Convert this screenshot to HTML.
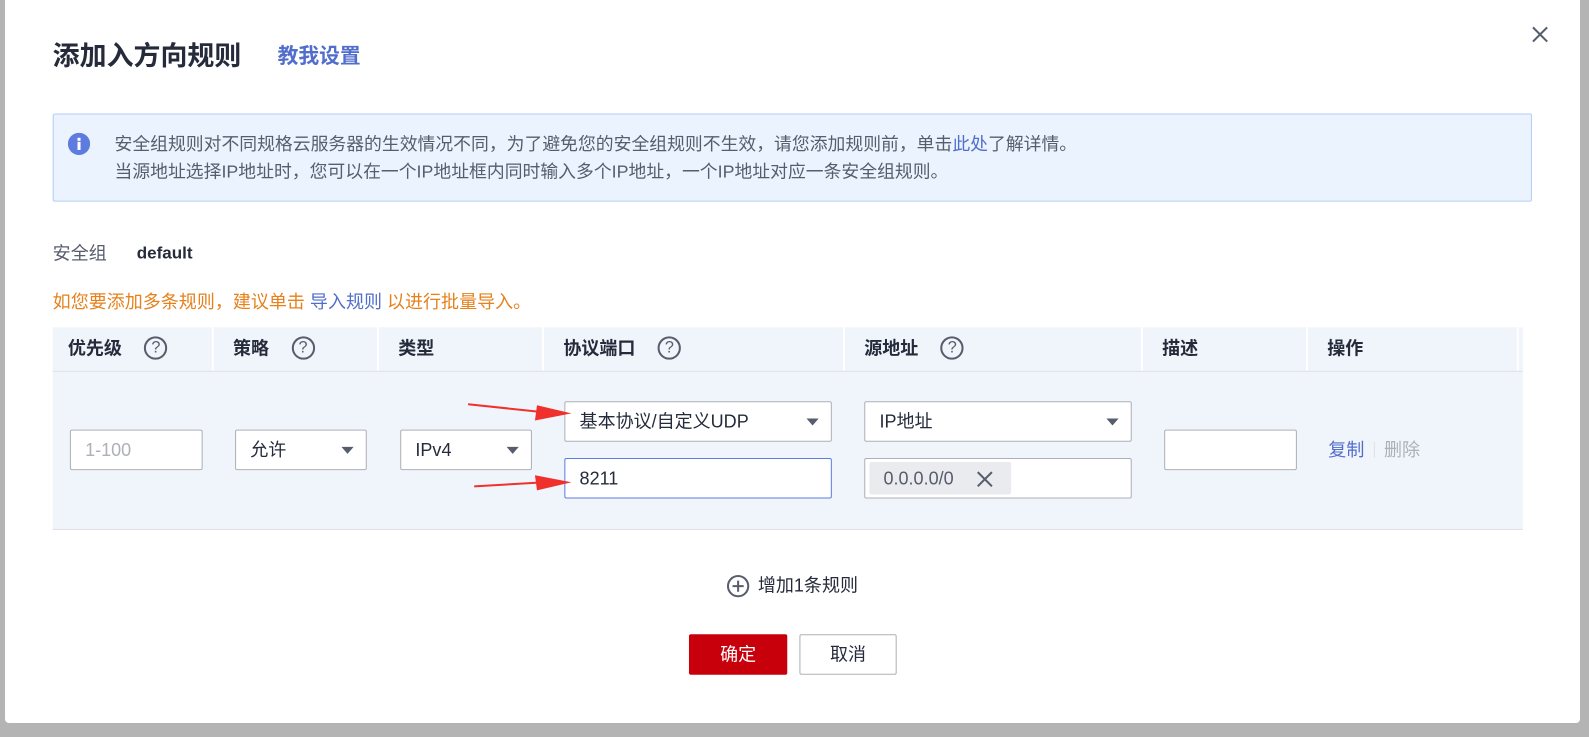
<!DOCTYPE html>
<html><head><meta charset="utf-8"><style>
*{box-sizing:border-box;margin:0;padding:0}
body{width:1589px;height:727px;background:#b4b4b4;position:relative;overflow:hidden;font-family:"Liberation Sans","Noto Sans CJK SC",sans-serif;color:#252b3a;font-size:17.8px}
.modal{position:absolute;left:5px;top:0;width:1575px;height:723px;background:#fff;border-radius:0 0 4px 4px}
.w{position:absolute;left:0;top:0;width:1589px;height:727px;transform:scale(1.0132);transform-origin:0 0}
.a{position:absolute}
.th{position:absolute;top:323px;height:43px;background:#f0f4fb;font-weight:bold;font-size:17.8px;line-height:43px;padding-left:19px;color:#252b3a;white-space:nowrap}
.q{display:inline-block;width:23px;height:23px;border:2px solid #575d6c;border-radius:50%;text-align:center;line-height:19px;font-size:16px;font-weight:normal;color:#575d6c;vertical-align:middle;margin-left:22px;margin-top:-3px}
.in{position:absolute;height:40px;background:#fff;border:1px solid #adb0b8;border-radius:2px;font-size:17.8px;line-height:38px;padding-left:14px;color:#252b3a;white-space:nowrap}
.tri{position:absolute;right:12px;top:16px;width:0;height:0;border-left:6px solid transparent;border-right:6px solid transparent;border-top:7px solid #575d6c}
</style></head><body>
<div class="modal"></div>
<div class="w">
<div class="a" style="left:52px;top:38px;font-size:26.6px;font-weight:bold;line-height:34px">添加入方向规则</div>
<div class="a" style="left:274px;top:43px;font-size:20.5px;font-weight:bold;color:#526ecc;line-height:26px">教我设置</div>
<svg class="a" style="left:1511px;top:25px" width="18" height="18"><path d="M2 2L16 16M16 2L2 16" stroke="#575d6c" stroke-width="2"/></svg>
<div class="a" style="left:52px;top:112px;width:1460px;height:87px;background:#ebf4fe;border:1px solid #b4cdf7;border-radius:2px"></div>
<svg class="a" style="left:67px;top:131px" width="22" height="22"><circle cx="11" cy="11" r="11" fill="#5e7ce0"/><rect x="9.5" y="9" width="3" height="8" fill="#fff"/><rect x="9.5" y="5" width="3" height="3" fill="#fff"/></svg>
<div class="a" style="left:113px;top:129px;font-size:17.6px;line-height:27px;color:#575d6c;white-space:nowrap">安全组规则对不同规格云服务器的生效情况不同，为了避免您的安全组规则不生效，请您添加规则前，单击<span style="color:#526ecc">此处</span>了解详情。<br>当源地址选择IP地址时，您可以在一个IP地址框内同时输入多个IP地址，一个IP地址对应一条安全组规则。</div>
<div class="a" style="left:52px;top:238px;font-size:17.8px;color:#575d6c;line-height:24px">安全组</div>
<div class="a" style="left:135px;top:238px;font-size:16.8px;font-weight:bold;line-height:24px">default</div>
<div class="a" style="left:52px;top:286px;font-size:17.8px;color:#e6811c;line-height:24px;white-space:nowrap">如您要添加多条规则，建议单击 <span style="color:#526ecc">导入规则</span> 以进行批量导入。</div>

<div class="th" style="left:52px;width:157px;padding-left:15px">优先级<span class="q">?</span></div>
<div class="th" style="left:211px;width:161px">策略<span class="q">?</span></div>
<div class="th" style="left:374px;width:161px">类型</div>
<div class="th" style="left:537px;width:295px">协议端口<span class="q">?</span></div>
<div class="th" style="left:834px;width:292px">源地址<span class="q">?</span></div>
<div class="th" style="left:1128px;width:161px">描述</div>
<div class="th" style="left:1291px;width:206px">操作</div>
<div class="th" style="left:1499px;width:4px;padding:0"></div>
<div class="a" style="left:52px;top:366px;width:1451px;height:157px;background:#f0f4fb;border-top:1px solid #dfe1e6;border-bottom:1px solid #dfe1e6"></div>

<div class="in" style="left:69px;top:424px;width:131px;color:#adb0b8">1-100</div>
<div class="in" style="left:232px;top:424px;width:130px">允许<span class="tri"></span></div>
<div class="in" style="left:395px;top:424px;width:130px">IPv4<span class="tri"></span></div>
<div class="in" style="left:557px;top:396px;width:264px">基本协议/自定义UDP<span class="tri"></span></div>
<div class="in" style="left:557px;top:452px;width:264px;border-color:#5e7ce0">8211</div>
<div class="in" style="left:853px;top:396px;width:264px">IP地址<span class="tri"></span></div>
<div class="in" style="left:853px;top:452px;width:264px;padding-left:4px"><span style="display:inline-block;margin-top:3px;height:32px;width:140px;background:#eaebef;border-radius:2px;line-height:32px;padding-left:14px;color:#575d6c">0.0.0.0/0</span><svg class="a" style="left:110px;top:12px" width="16" height="16"><path d="M1 1L15 15M15 1L1 15" stroke="#575d6c" stroke-width="2"/></svg></div>
<div class="in" style="left:1149px;top:424px;width:131px"></div>
<div class="a" style="left:1311px;top:432px;font-size:17.8px;line-height:24px;color:#526ecc">复制</div>
<div class="a" style="left:1356px;top:436px;width:1px;height:16px;background:#dfe1e6"></div>
<div class="a" style="left:1366px;top:432px;font-size:17.8px;line-height:24px;color:#adb0b8">删除</div>

<svg class="a" style="left:460px;top:390px;overflow:visible" width="110" height="100">
<path d="M2 9L78 17" stroke="#f0302c" stroke-width="2"/><path d="M70 10L104 18L68 25Z" fill="#f0302c"/>
<path d="M8 90L78 86" stroke="#f0302c" stroke-width="2"/><path d="M68 79L104 86L70 94Z" fill="#f0302c"/>
</svg>

<svg class="a" style="left:717px;top:567px" width="23" height="23"><circle cx="11.5" cy="11.5" r="10" fill="none" stroke="#575d6c" stroke-width="2"/><path d="M11.5 6v11M6 11.5h11" stroke="#575d6c" stroke-width="2"/></svg>
<div class="a" style="left:748px;top:566px;font-size:17.8px;line-height:24px;white-space:nowrap">增加1条规则</div>
<div class="a" style="left:680px;top:626px;width:97px;height:40px;background:#c7000b;border-radius:2px;color:#fff;font-size:17.8px;line-height:40px;text-align:center">确定</div>
<div class="a" style="left:789px;top:626px;width:96px;height:40px;border:1px solid #adb0b8;border-radius:2px;font-size:17.8px;line-height:38px;text-align:center">取消</div>
</div>
</body></html>
